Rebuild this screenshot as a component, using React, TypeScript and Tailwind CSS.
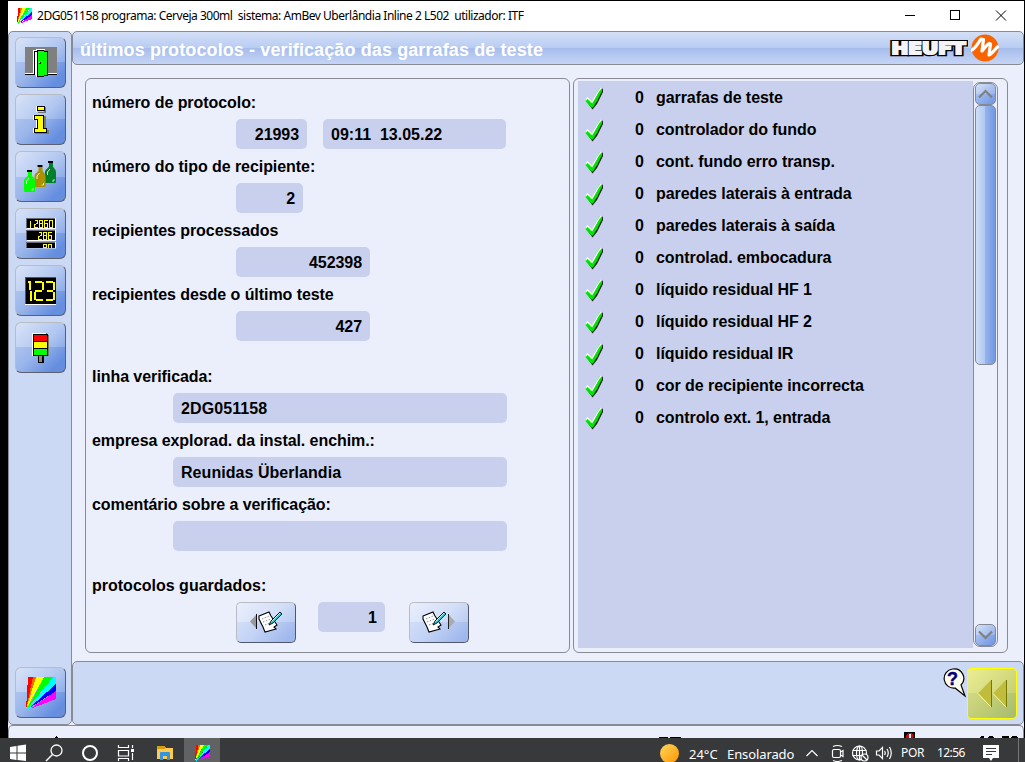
import type { ReactNode } from "react";

const stripes: [string, string][] = [
  ["#ff0000", "0,32 2,0 7,0"],
  ["#ff6a00", "0,32 7,0 10,0"],
  ["#ffff00", "0,32 10,0 18,0"],
  ["#00ff00", "1,32 18,0 27,0"],
  ["#00ffff", "2,32 27,0 30,0 30,7"],
  ["#0000ff", "2,32 30,7 30,14"],
  ["#ff00ff", "4,32 30,14 30,22"],
];

function Rainbow({ className }: { className: string }) {
  return (
    <svg className={className} viewBox="0 0 30 32" preserveAspectRatio="none" shapeRendering="crispEdges">
      {stripes.map(([c, p]) => (
        <polygon key={c} points={p} fill={c} />
      ))}
    </svg>
  );
}

function SideButton({ children }: { children: ReactNode }) {
  return (
    <button className="flex h-[51px] w-[51px] shrink-0 items-center justify-center rounded-[6px] border border-t-[#b9bcc4] border-l-[#b9bcc4] border-r-[#5a6070] border-b-[#5a6070] bg-[linear-gradient(to_bottom,rgba(255,255,255,0.12)_50%,rgba(40,90,200,0.10)_50%),linear-gradient(135deg,#d3dff7_0%,#a6bfee_50%,#6c94e2_85%)]">
      {children}
    </button>
  );
}

function DoorIcon() {
  return (
    <svg className="h-[31px] w-[34px]" viewBox="0 0 34 31" shapeRendering="crispEdges">
      <path d="M1 0H33V26H1Z" fill="#808080" />
      <path d="M1 26.500H9.500V3.500H12V2.500H21" fill="none" stroke="#fff" />
      <path d="M24 26.500H33" stroke="#fff" />
      <path d="M1 27.500H10.500V4.500H13" fill="none" stroke="#000" />
      <path d="M24 27.500H33" stroke="#000" />
      <path d="M11 5H13V29H15V30H12V28H11Z" fill="#fff" />
      <path d="M13.500 3.500H18L23.500 5V28L18 29.500H13.500Z" fill="#00ff00" stroke="#000" />
      <path d="M15 15h2v2h-2z" fill="#000" />
      <path d="M15 15h1v1h-1z" fill="#fff" />
    </svg>
  );
}

function InfoIcon() {
  return (
    <svg className="h-[28px] w-[16px]" viewBox="0 0 16 28" shapeRendering="crispEdges">
      <g transform="translate(1 1)" fill="#777">
        <path d="M4 0h8v6H4zM1 9h11v14h3v4H1v-4h3V13H1z" />
      </g>
      <g fill="#ffff00" stroke="#000">
        <path d="M4.500 .5h7v4h-7zM1.500 9.500h9v13h3v4h-12v-4h3v-9h-3z" />
      </g>
      <path d="M5 5.500h6M5 1.500h6" stroke="#fff" strokeOpacity=".6" />
      <path d="M3.500 0v6M.5 9v5M.5 22v5M3.500 14v8" stroke="#fff" />
    </svg>
  );
}

function BottlesIcon() {
  const bottle = "M4 2H8V5C8 7 11 8 11 11V21Q11 22 10 22H1Q0 22 0 21V11C0 8 4 7 4 5Z";
  return (
    <svg className="h-[32px] w-[33px]" viewBox="0 0 33 32">
      {[
        { x: 21, y: 0, c: "#00802b" },
        { x: 10.500, y: 4, c: "#ab9200" },
        { x: 0, y: 9, c: "#00ff00" },
      ].map((b) => (
        <g key={b.x} transform={`translate(${b.x} ${b.y})`}>
          <path d={bottle} fill={b.c} />
          <path d="M3 0H8V2H3Z" fill="#000" />
          <path d="M2.500 14V11L5 8" stroke="#fff" strokeOpacity=".85" fill="none" />
          <path d="M9 18V20H7" stroke="#fff" strokeOpacity=".7" fill="none" />
        </g>
      ))}
    </svg>
  );
}

const segments: Record<string, string> = {
  "0": "M0 0H3V7H0Z",
  "1": "M1 0V7",
  "2": "M0 0H3V3L0 4V7H3.500",
  "6": "M3 0H0V7H3V3H0",
  "8": "M0 0H3V7H0ZM0 3H3",
};

function Digits({ value, x, y }: { value: string; x: number; y: number }) {
  return (
    <g stroke="#ffff00" strokeWidth="1" fill="none">
      {value.split("").map((d, i) => (
        <path key={i} d={segments[d]} transform={`translate(${x + i * 5} ${y})`} />
      ))}
    </g>
  );
}

function CountersIcon() {
  return (
    <svg className="h-[31px] w-[30px]" viewBox="0 0 30 31" shapeRendering="crispEdges">
      {[0, 12, 24].map((y) => (
        <g key={y}>
          <path d={`M0 ${y}h29v1h-29zM0 ${y}h1v10h-1z`} fill="#667" />
          <path d={`M1 ${y + 10}h29v1h-29zM29 ${y}h1v10h-1z`} fill="#fff" />
          <path d={`M1 ${y + 1}h28v9h-28z`} fill="#000" />
        </g>
      ))}
      <Digits value="12860" x={3.500} y={2.500} />
      <Digits value="286" x={12.500} y={14.500} />
      <Digits value="80" x={17.500} y={26.500} />
      <path d="M0 30H30V31H0Z" fill="#a9bfec" />
    </svg>
  );
}

function NumberIcon() {
  return (
    <svg className="h-[28px] w-[31px]" viewBox="0 0 31 28" shapeRendering="crispEdges">
      <path d="M0 0H31V28H0Z" fill="#fff" />
      <path d="M0 0H31V27H0Z" fill="#555" />
      <path d="M1 1H31V27H1Z" fill="#000" />
      <g fill="#ffff00">
        <path d="M4 4h2v9h-2zM5 14h2v10h-2zM3 4h2v2h-2z" />
        <path d="M10 4h7v2h-7zM17 5h2v8h-2zM10 13h7v2h-7zM9 15h2v8h-2zM11 22h7v2h-7z" />
        <path d="M21 4h7v2h-7zM28 5h2v8h-2zM22 13h6v2h-6zM28 15h2v8h-2zM21 22h7v2h-7z" />
      </g>
    </svg>
  );
}

function LampIcon() {
  return (
    <svg className="h-[32px] w-[17px]" viewBox="0 0 17 32" shapeRendering="crispEdges">
      <path d="M2 1H15V3H17V24H2Z" fill="#777" />
      <path d="M0 1H14V2H2V24H0Z" fill="#fff" />
      <path d="M1 2H16V24H1Z" fill="#000" />
      <path d="M2 3h13v6H2z" fill="#ff0000" />
      <path d="M2 10h13v6H2z" fill="#ffff00" />
      <path d="M2 17h13v6H2z" fill="#00ff00" />
      <path d="M6 24h6v7H6z" fill="#000" />
      <path d="M7 24h3v6H7z" fill="#888" />
    </svg>
  );
}

function Label({ children }: { children: ReactNode }) {
  return <div className="h-[32px] leading-[32px]">{children}</div>;
}

function Field({ className, children }: { className: string; children?: ReactNode }) {
  return (
    <div className={`h-[30px] rounded-[5px] bg-[#c9d0ed] px-2 leading-[31px] whitespace-pre ${className}`}>{children}</div>
  );
}

function Note() {
  return (
    <g>
      <path d="M1 5L11 1L13 5L19 14L16 16L18 18L7 21L5 16L1 8Z" fill="#fff" stroke="#000" strokeWidth="1.100" />
      <path d="M4 8L11 5M5 11L13 8M7 14L12 12" stroke="#8890a0" strokeDasharray="1.500 1.500" />
      <path d="M11 14L13 10L22 1L24 3L15 12Z" fill="#00d5e5" stroke="#000" strokeWidth=".9" />
      <path d="M13.500 10.500L22 2" stroke="#fff" strokeWidth=".8" />
    </g>
  );
}

function PageButton({ next }: { next?: boolean }) {
  return (
    <button className="flex h-[41px] w-[60px] items-center justify-center rounded-[5px] border border-t-[#b9bcc4] border-l-[#b9bcc4] border-r-[#50576a] border-b-[#50576a] bg-[linear-gradient(to_bottom,rgba(255,255,255,0.15)_50%,rgba(60,110,220,0.06)_50%),linear-gradient(135deg,#e6ecfb_0%,#cbd9f7_50%,#a5bced_90%)]">
      <svg className="mb-[2px] h-[22px] w-[34px]" viewBox="0 0 34 22">
        {next ? (
          <>
            <Note />
            <path d="M27 4L33 10.500L27 17Z" fill="#aaa" />
            <path d="M26.500 3V18" stroke="#222" />
          </>
        ) : (
          <>
            <path d="M7 4L1 10.500L7 17Z" fill="#999" />
            <path d="M7.500 3V18" stroke="#111" />
            <g transform="translate(9 0)">
              <Note />
            </g>
          </>
        )}
      </svg>
    </button>
  );
}

function Check() {
  return (
    <svg className="h-[23px] w-[20px]" viewBox="0 0 20 23">
      <path d="M3 15L8.500 22.500L13 17L19 5V1L15 8L9 19Z" fill="#1c1c1c" />
      <path d="M1 13.500L3.500 10.500L8 15.500L15 2L18 0V4L13 14L9 20.500H7Z" fill="#00e400" />
      <path d="M1.500 13.500L3.500 11L8 15.500L15 3.500L17.500 .5" stroke="#fff" strokeWidth="1.200" fill="none" />
    </svg>
  );
}

const results = [
  "garrafas de teste",
  "controlador do fundo",
  "cont. fundo erro transp.",
  "paredes laterais à entrada",
  "paredes laterais à saída",
  "controlad. embocadura",
  "líquido residual HF 1",
  "líquido residual HF 2",
  "líquido residual IR",
  "cor de recipiente incorrecta",
  "controlo ext. 1, entrada",
];

function ScrollButton({ down }: { down?: boolean }) {
  return (
    <div className="flex h-[22px] w-[21px] shrink-0 items-center justify-center rounded-[5px] border border-[#858994] bg-[linear-gradient(to_bottom,rgba(255,255,255,0.1)_50%,rgba(50,100,220,0.1)_50%),linear-gradient(135deg,#d2dff7,#9bb7ec_55%,#759ae4)]">
      <svg className="h-[10px] w-[15px]" viewBox="0 0 15 10">
        <path d={down ? "M1 1.500L7.500 8L14 1.500" : "M1 8.500L7.500 2L14 8.500"} fill="none" stroke="#808080" strokeWidth="2.200" />
      </svg>
    </div>
  );
}

function Logo() {
  return (
    <div className="flex items-center gap-[3px]">
      <svg className="h-[17px] w-[79px]" viewBox="0 0 79 17">
        <text
          x="2.500"
          y="13.500"
          textLength="74"
          lengthAdjust="spacingAndGlyphs"
          className="fill-black stroke-black font-['DejaVu_Sans',sans-serif] text-[15px] font-bold"
          strokeWidth="4.600"
        >
          HEUFT
        </text>
        <text
          x="2.500"
          y="13.500"
          textLength="74"
          lengthAdjust="spacingAndGlyphs"
          aria-hidden="true"
          className="fill-[#f4f4f4] stroke-[#f4f4f4] font-['DejaVu_Sans',sans-serif] text-[15px] font-bold"
          strokeWidth="2"
        >
          HEUFT
        </text>
      </svg>
      <svg className="h-[28px] w-[28px]" viewBox="0 0 28 28">
        <circle cx="14" cy="14" r="13.500" fill="#fa6400" />
        <path
          d="M0 16.500C4 15 7 9 10 5L12.500 5.500L11 17C13 15 15.500 11 18 9.500L19.500 10L18 21C21 20 23 16 27.500 12"
          fill="none"
          stroke="#fff"
          strokeWidth="3.200"
          strokeLinejoin="round"
        />
      </svg>
    </div>
  );
}

function Taskbar() {
  return (
    <div className="flex h-[24px] shrink-0 items-start bg-[#38393b] font-normal text-white">
      <svg className="h-6 w-[184px]" viewBox="0 0 184 24" fill="none" stroke="#fff">
        <path d="M10 9L16.500 8V14.500H10ZM17.500 7.800L26 6.500V14.500H17.500ZM10 15.500H16.500V22L10 21ZM17.500 15.500H26V23L17.500 22Z" fill="#fff" stroke="none" />
        <circle cx="56.500" cy="12.500" r="5.500" strokeWidth="1.300" />
        <path d="M52.500 16.500L46 23" strokeWidth="1.500" />
        <circle cx="90" cy="15" r="7" strokeWidth="2" />
        <path d="M118.500 7V9.500H128.500V7M118.500 12.500H128.500V18H118.500ZM118.500 23V20.500H128.500V23M132.500 7V10M132.500 15V22" strokeWidth="1.200" />
        <path d="M131 11h3v3h-3z" fill="#fff" stroke="none" />
        <path d="M157 8H164L166 10H173V21H157Z" fill="#ffca4d" stroke="none" />
        <path d="M157 8H164L166 10L164 11H157Z" fill="#d99a14" stroke="none" />
        <path d="M160 22V15Q160 14 161 14H169Q170 14 170 15V22H167V18H163V22Z" fill="#3395df" stroke="none" />
      </svg>
      <div className="flex h-6 w-9 justify-center bg-[#616264] pt-[7px]">
        <Rainbow className="h-4 w-[15px]" />
      </div>
      <div className="flex h-6 grow items-start justify-end font-['Noto_Sans',sans-serif]">
        <div className="mt-[6px] h-[19px] w-[19px] rounded-full bg-[linear-gradient(135deg,#ffd75e,#ff9500)]" />
        <div className="ml-[10px] h-6 w-[30px] text-[13px] leading-[32px] whitespace-nowrap">24°C</div>
        <div className="ml-2 h-6 w-[71px] text-[13px] leading-[32px] tracking-[-0.1px] whitespace-nowrap">Ensolarado</div>
        <svg className="h-6 w-[94px]" viewBox="798 0 94 24" fill="none" stroke="#fff" strokeWidth="1.200">
          <path d="M806.500 18L812 12.500L817.500 18" />
          <rect x="832.500" y="11.500" width="8" height="8" rx="1.500" />
          <path d="M840.500 14L843 12.500V18.500L840.500 17M833 8.500Q837 6.500 842 8.500M833 22.500Q837 24.500 842 22.500" />
          <circle cx="859.500" cy="15" r="7" />
          <ellipse cx="859.500" cy="15" rx="3" ry="7" />
          <path d="M852.500 12.500H866.500M852.500 17.500H862M859.500 8V22" />
          <circle cx="864.500" cy="19.500" r="3.500" fill="#38393b" />
          <path d="M862 17L867 22" />
          <path d="M876.500 13H879L882.500 9.500V20.500L879 17H876.500ZM884.500 13Q886 15 884.500 17M887 11Q889.500 15 887 19M889.500 9Q893 15 889.500 21" />
        </svg>
        <div className="ml-[9px] h-6 w-[24px] text-[12px] leading-[29px] tracking-[-0.3px]">POR</div>
        <div className="ml-3 h-6 w-[28px] text-[12px] leading-[29px] tracking-[-0.6px]">12:56</div>
        <svg className="ml-[17px] h-6 w-[18px]" viewBox="0 0 18 24">
          <path d="M1 7H17V20H11L9 23L7 20H1Z" fill="#fff" />
          <path d="M4 10.500H14M4 13.500H14M4 16.500H10" stroke="#38393b" />
        </svg>
        <div className="ml-[18px] h-6 w-[7px] border-l border-[#777]" />
      </div>
    </div>
  );
}

export default function App() {
  return (
    <div className="flex h-[762px] w-[1025px] flex-col overflow-hidden bg-black font-['Liberation_Sans',Arial,sans-serif] text-[16px] font-bold text-black">
      <div className="mt-px mr-px ml-2 flex h-[737px] flex-col bg-[#ebeffb]">
        <header className="flex h-[30px] shrink-0 items-center bg-white font-['Noto_Sans',sans-serif] text-[12px] font-normal">
          <Rainbow className="ml-[9px] h-4 w-[15px]" />
          <span className="ml-[5px] tracking-[-0.475px] whitespace-pre">2DG051158 programa: Cerveja 300ml  sistema: AmBev Uberlândia Inline 2 L502  utilizador: ITF</span>
          <svg className="ml-auto h-[30px] w-[124px]" viewBox="0 0 124 30" fill="none" stroke="#000" shapeRendering="crispEdges">
            <path d="M5 14.500H15M50.500 9.500H59.500V18.500H50.500Z" />
            <path d="M96 9.500L106 19.500M106 9.500L96 19.500" shapeRendering="auto" />
          </svg>
        </header>

        <div className="flex h-[694px] shrink-0">
          <aside className="flex w-[64px] flex-col gap-[6px] rounded-[5px] border border-[#888b92] bg-[#ccd9f4] pt-[5px] pb-[6px] pl-[6px]">
            <SideButton><DoorIcon /></SideButton>
            <SideButton><InfoIcon /></SideButton>
            <SideButton><BottlesIcon /></SideButton>
            <SideButton><CountersIcon /></SideButton>
            <SideButton><NumberIcon /></SideButton>
            <SideButton><LampIcon /></SideButton>
            <div className="grow" />
            <SideButton><Rainbow className="h-8 w-[30px]" /></SideButton>
          </aside>

          <main className="flex w-[952px] flex-col">
            <div className="flex h-[34px] shrink-0 items-center justify-between rounded-[5px] border border-[#888b92] bg-[linear-gradient(to_bottom,#d4dff6_0%,#b8ccf3_50%,#a5bdec_50%,#c5d5f5_100%)] pr-[24px] pl-[7px]">
              <h1 className="pt-[3px] text-[18px] leading-[20px] tracking-[0.11px] text-white">últimos protocolos - verificação das garrafas de teste</h1>
              <Logo />
            </div>

            <div className="mt-[13px] ml-[13px] flex h-[575px] shrink-0 gap-[3px]">
              <section className="flex w-[485px] flex-col rounded-[6px] border border-[#888b92] pt-[8px] pl-[6px]">
                <div className="flex flex-col gap-[2px] tracking-[-0.06px]">
                  <div>
                    <Label>número de protocolo:</Label>
                    <div className="ml-[144px] flex gap-4">
                      <Field className="w-[71px] text-right">21993</Field>
                      <Field className="w-[183px] tracking-normal">09:11  13.05.22</Field>
                    </div>
                  </div>
                  <div>
                    <Label>número do tipo de recipiente:</Label>
                    <Field className="ml-[144px] w-[67px] text-right">2</Field>
                  </div>
                  <div>
                    <Label>recipientes processados</Label>
                    <Field className="ml-[144px] w-[134px] text-right">452398</Field>
                  </div>
                  <div>
                    <Label>recipientes desde o último teste</Label>
                    <Field className="ml-[144px] w-[134px] text-right">427</Field>
                  </div>
                </div>
                <div className="mt-[20px] flex flex-col gap-[2px]">
                  <div className="tracking-[-0.07px]">
                    <Label>linha verificada:</Label>
                    <Field className="ml-[81px] w-[334px] tracking-[0.1px]">2DG051158</Field>
                  </div>
                  <div className="tracking-[-0.07px]">
                    <Label>empresa explorad. da instal. enchim.:</Label>
                    <Field className="ml-[81px] w-[334px] tracking-[0.05px]">Reunidas Überlandia</Field>
                  </div>
                  <div className="tracking-[-0.07px]">
                    <Label>comentário sobre a verificação:</Label>
                    <Field className="ml-[81px] w-[334px]" />
                  </div>
                </div>
                <div className="mt-[19px]">
                  <Label>protocolos guardados:</Label>
                  <div className="ml-[144px] flex items-start">
                    <PageButton />
                    <Field className="mr-6 ml-[22px] w-[67px] text-right">1</Field>
                    <PageButton next />
                  </div>
                </div>
              </section>

              <section className="flex w-[435px] items-start rounded-[6px] border border-[#888b92] pl-[4px]">
                <ul className="mt-[2px] h-[567px] w-[395px] bg-[#c9d0ed] pt-px tracking-[-0.07px]">
                  {results.map((r) => (
                    <li key={r} className="flex h-8 items-center pl-[6px]">
                      <Check />
                      <span className="ml-[31px] w-[10px]">0</span>
                      <span className="ml-[11px]">{r}</span>
                    </li>
                  ))}
                </ul>
                <div className="mt-[3px] flex h-[565px] w-[25px] flex-col items-center rounded-[7px] border border-[#888b92]">
                  <ScrollButton />
                  <div className="h-[260px] w-[21px] rounded-[5px] border border-[#858994] bg-[linear-gradient(to_right,#d0def7_0%,#afc7f2_48%,#96b3ec_50%,#7198e3_100%)]" />
                  <div className="grow" />
                  <ScrollButton down />
                </div>
              </section>
            </div>

            <footer className="mt-[8px] flex h-[64px] shrink-0 items-start justify-end rounded-[5px] border border-[#888b92] bg-[#ccd9f4] pt-[6px] pr-[6px]">
              <svg className="mr-px h-[30px] w-[24px]" viewBox="0 0 24 30">
                <path d="M10.500 1A9.500 9.500 0 1 0 13 20L23 28L19 17A9.500 9.500 0 0 0 10.500 1Z" fill="#fffff0" stroke="#000" strokeWidth="1.200" />
                <text x="5" y="17" className="fill-[#000080] stroke-[#000080] text-[18px] font-bold" strokeWidth=".4">?</text>
              </svg>
              <button className="flex h-[51px] w-[50px] items-center justify-center rounded-[4px] border border-[#ffff00] bg-[linear-gradient(to_bottom,rgba(255,255,170,0.08)_50%,rgba(60,130,100,0.08)_50%),linear-gradient(135deg,#eaec93,#cdd477_55%,#adc070)]">
                <svg className="h-[29px] w-[30px]" viewBox="0 0 30 29">
                  <path d="M14 1V28L1 14.500ZM29 1V28L16 14.500Z" fill="#c0bd3d" />
                  <path d="M14.500 1V28M29.500 1V28" stroke="#777800" />
                  <path d="M1 14.500L14 28M16 14.500L29 28" stroke="#ffff9a" />
                </svg>
              </button>
            </footer>
          </main>
        </div>

        <div className="h-[13px] shrink-0 rounded-t-[5px] border border-b-0 border-[#888b92]">
          <svg className="h-3 w-full" viewBox="9 726 1014 12" shapeRendering="crispEdges">
            <path d="M55 737h3v1h-3zM56 736h1v1h-1zM659 737h9v1h-9zM670 737h11v1h-11zM904 732h11v6h-11zM980 737h4v1h-4zM981 736h3v1h-3zM988 737h6v1h-6zM989 736h4v1h-4zM1002 736h7v2h-7zM1011 737h7v1h-7zM1012 736h5v1h-5z" fill="#000" />
            <path d="M906 738V735L908 733H911L913 735V738Z" fill="#e00000" />
            <path d="M909 734h2v4h-2z" fill="#fff" />
          </svg>
        </div>
      </div>
      <Taskbar />
    </div>
  );
}
